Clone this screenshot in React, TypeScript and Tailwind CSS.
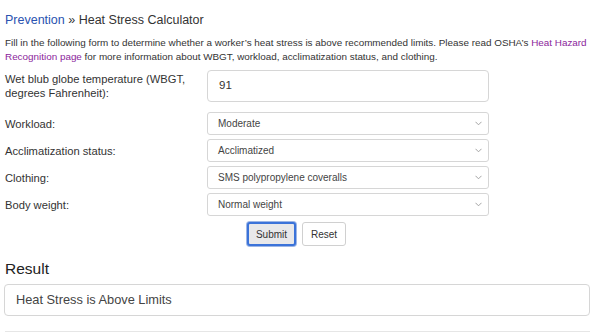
import type { ReactNode } from 'react'

const font = { fontFamily: '"Liberation Sans", Arial, Helvetica, sans-serif' }

function Chevron() {
  return (
    <svg width="7" height="5" viewBox="0 0 7 5" className="shrink-0">
      <path d="M0.5 0.8 L3.5 3.8 L6.5 0.8" fill="none" stroke="#9a9a9a" strokeWidth="0.9" />
    </svg>
  )
}

function Row({ label, children, className = '' }: { label: ReactNode; children: ReactNode; className?: string }) {
  return (
    <div className={`grid grid-cols-[202px_282px] items-center ${className}`}>
      <div className="text-[11.2px] leading-[14px] text-[#333]">{label}</div>
      {children}
    </div>
  )
}

function SelectBox({ value }: { value: string }) {
  return (
    <div className="flex h-[23px] items-center justify-between rounded-[3px] border border-[#d6d6d6] bg-white pl-[10px] pr-[6px] text-[10px] text-[#444]">
      <span>{value}</span>
      <Chevron />
    </div>
  )
}

export default function App() {
  return (
    <div style={font} className="h-[333px] w-[600px] overflow-hidden bg-white text-[#333]">
      <div className="w-[590px] pl-[5px] pt-[10px]">
        <h1 className="text-[12.5px] leading-[20px]">
          <a className="text-[#2a52b0]">Prevention</a> » Heat Stress Calculator
        </h1>

        <p className="mt-[6px] text-[9.9px] leading-[14px]">
          Fill in the following form to determine whether a worker’s heat stress is above recommended limits. Please read OSHA’s{' '}
          <a className="text-[#8b1e9b]">Heat Hazard</a>
          <br />
          <a className="text-[#8b1e9b]">Recognition page</a> for more information about WBGT, workload, acclimatization status, and clothing.
        </p>

        <Row
          className="mt-[6px]"
          label={
            <>
              Wet blub globe temperature (WBGT,
              <br />
              degrees Fahrenheit):
            </>
          }
        >
          <div className="flex h-[32px] items-center rounded-[4px] border border-[#d6d6d6] bg-white px-[11px] text-[11.5px] text-[#333]">
            91
          </div>
        </Row>

        <Row className="mt-[10px]" label="Workload:">
          <SelectBox value="Moderate" />
        </Row>
        <Row className="mt-[4px]" label="Acclimatization status:">
          <SelectBox value="Acclimatized" />
        </Row>
        <Row className="mt-[4px]" label="Clothing:">
          <SelectBox value="SMS polypropylene coveralls" />
        </Row>
        <Row className="mt-[4px]" label="Body weight:">
          <SelectBox value="Normal weight" />
        </Row>

        <div className="mt-[6px] flex justify-center gap-[6px] pr-[2px]">
          <button className="h-[24px] w-[49px] rounded-[3px] border-2 border-[#3b73d9] bg-[#e8e8ea] text-[10px] text-[#333] shadow-[0_0_0_1px_#9db6e6]">
            Submit
          </button>
          <button className="h-[24px] w-[44px] rounded-[3px] border border-[#d0d0d0] bg-white text-[10px] text-[#333]">
            Reset
          </button>
        </div>

        <h2 className="mt-[13px] text-[15.5px] leading-[20px] text-[#222]">Result</h2>

        <div className="ml-[-1px] mt-[5px] flex h-[32px] items-center rounded-[4px] border border-[#d6d6d6] bg-white px-[11px] text-[12.8px] text-[#444]">
          Heat Stress is Above Limits
        </div>

        <div className="mt-[15px] border-t border-[#e6e6e6]" />
      </div>
    </div>
  )
}
